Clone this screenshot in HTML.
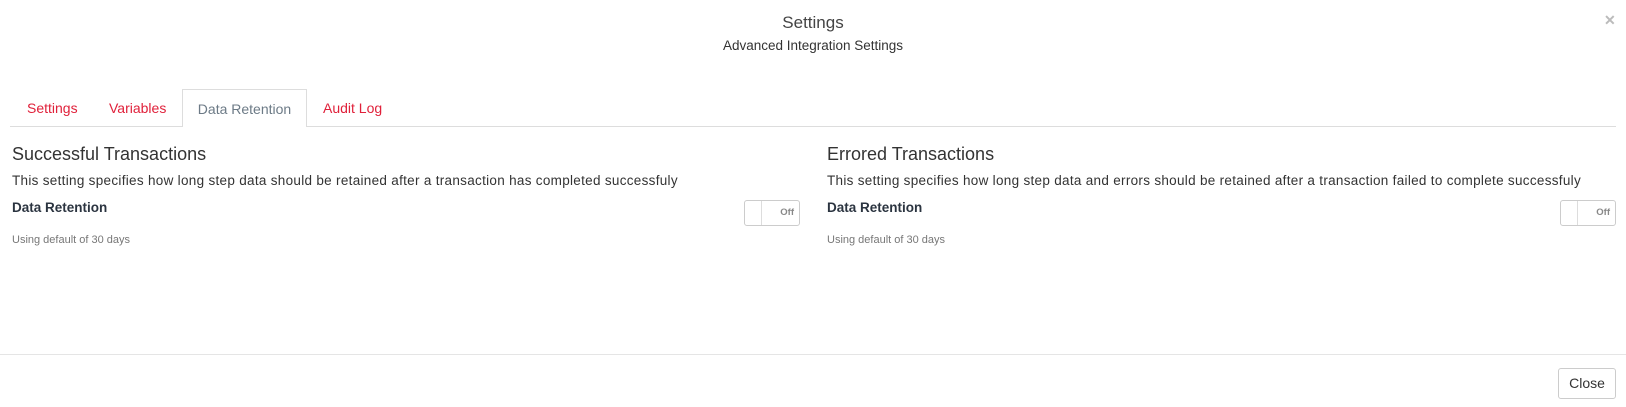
<!DOCTYPE html>
<html><head><meta charset="utf-8"><style>
*{box-sizing:border-box;margin:0;padding:0}
body{width:1626px;height:407px;background:#fff;font-family:"Liberation Sans",sans-serif;color:#333;position:relative;overflow:hidden}
.abs{position:absolute;white-space:nowrap}
.title{left:0;width:1626px;text-align:center;top:13px;font-size:17px;color:#444}
.sub{left:0;width:1626px;text-align:center;top:38px;font-size:13.5px;color:#333}
.x{left:1604px;top:12px;font-size:14px;color:#bbb;font-weight:bold}
.tabline{left:10px;top:126px;width:1606px;height:1px;background:#ddd}
.tab{top:100px;font-size:14px;color:#e0203a}
.atab{left:182px;top:89px;width:125px;height:38px;border:1px solid #ddd;border-bottom:none;background:#fff;color:#6c7a86;font-size:14px;text-align:center;line-height:38px}
.h{font-size:18px;color:#333;top:144px}
.d{font-size:13.5px;color:#333;top:173px;letter-spacing:0.3px}
.b{font-size:13.5px;font-weight:bold;color:#2b3440;top:200px}
.s{font-size:11px;color:#777;top:234px}
.tg{top:200px;width:56px;height:26px;border:1px solid #ccc;border-radius:3px}
.tg i{position:absolute;left:16px;top:0;bottom:0;border-left:1px solid #ddd}
.tg span{position:absolute;right:5px;top:6px;font-size:9.5px;font-weight:bold;color:#888}
.fl{left:0;top:354px;width:1626px;height:1px;background:#e5e5e5}
.btn{left:1558px;top:368px;width:58px;height:31px;border:1px solid #ccc;border-radius:3px;font-size:14px;text-align:center;line-height:29px;color:#333}
</style></head><body>
<div class="abs title">Settings</div>
<div class="abs sub">Advanced Integration Settings</div>
<div class="abs x">✕</div>
<div class="abs tabline"></div>
<div class="abs tab" style="left:27px">Settings</div>
<div class="abs tab" style="left:109px">Variables</div>
<div class="abs atab">Data Retention</div>
<div class="abs tab" style="left:323px">Audit Log</div>

<div class="abs h" style="left:12px">Successful Transactions</div>
<div class="abs d" style="left:12px">This setting specifies how long step data should be retained after a transaction has completed successfuly</div>
<div class="abs b" style="left:12px">Data Retention</div>
<div class="abs tg" style="left:744px"><i></i><span>Off</span></div>
<div class="abs s" style="left:12px">Using default of 30 days</div>

<div class="abs h" style="left:827px">Errored Transactions</div>
<div class="abs d" style="left:827px">This setting specifies how long step data and errors should be retained after a transaction failed to complete successfuly</div>
<div class="abs b" style="left:827px">Data Retention</div>
<div class="abs tg" style="left:1560px"><i></i><span>Off</span></div>
<div class="abs s" style="left:827px">Using default of 30 days</div>

<div class="abs fl"></div>
<div class="abs btn">Close</div>
</body></html>
